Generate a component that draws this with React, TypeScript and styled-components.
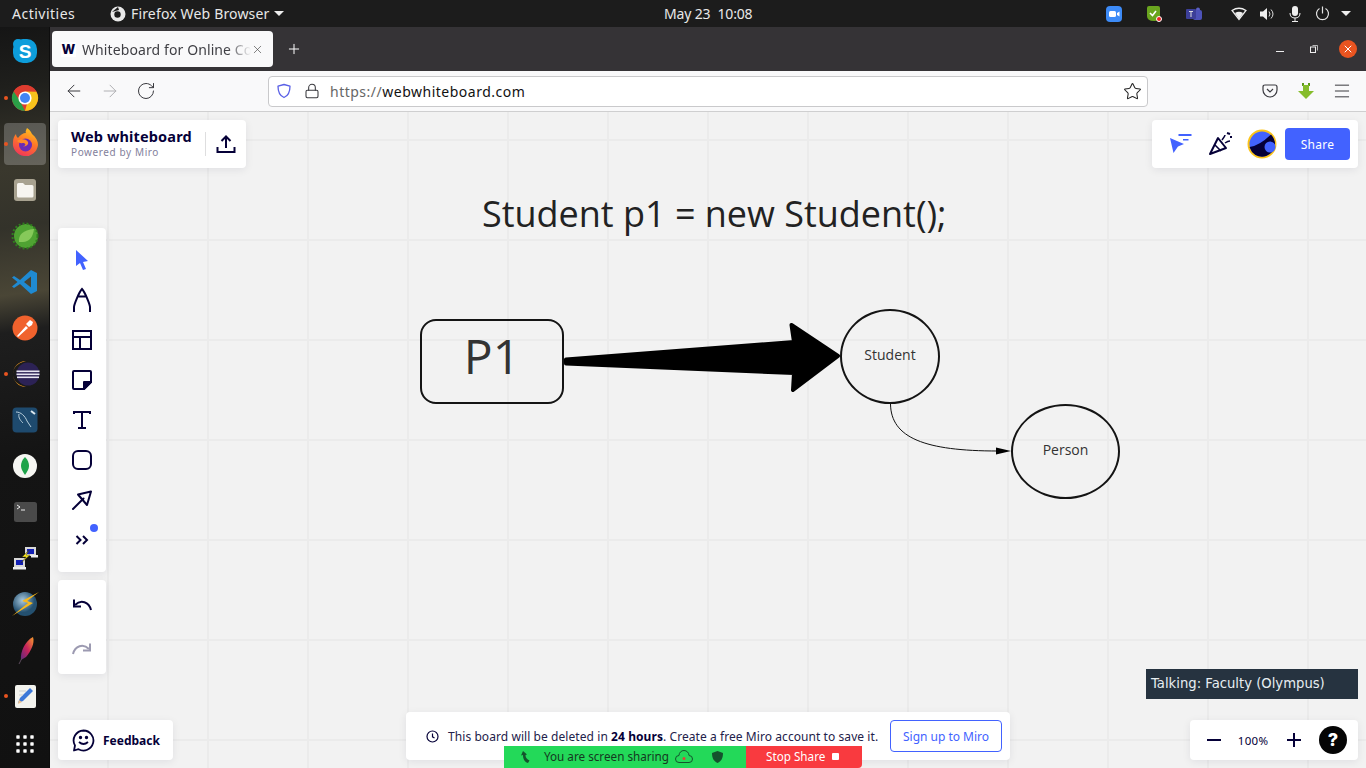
import React from "react";
import styled, { createGlobalStyle } from "styled-components";
import { ArrowLeft, ArrowRight, RotateCw, Lock, Star, Menu, Plus, X } from "lucide-react";

const Global = createGlobalStyle`
  html, body { margin: 0; padding: 0; width: 1366px; height: 768px; overflow: hidden; }
  * { box-sizing: border-box; }
  body { font-family: "Noto Sans", "Open Sans", sans-serif; }
`;

const Screen = styled.div`
  width: 1366px; height: 768px; display: flex; flex-direction: column; overflow: hidden; background: #111;
`;
const TopBar = styled.div`
  height: 27px; flex: none; background: #1c1c1c; color: #e8e8e8; display: flex; align-items: center;
  padding: 0 0 0 12px; font-size: 14px; position: relative;
`;
const Activities = styled.span` width: 98px; letter-spacing: .5px; `;
const AppMenu = styled.div` display: flex; align-items: center; gap: 5px; width: 190px; letter-spacing: .16px; `;
const Caret = styled.span`
  width: 0; height: 0; border-left: 5px solid transparent; border-right: 5px solid transparent; border-top: 5px solid #eee;
`;
const Clock = styled.div` position: absolute; left: 664px; top: 4px; font-size: 14px; white-space: pre; letter-spacing: -.15px; `;
const Tray = styled.div` margin-left: auto; display: flex; align-items: center; height: 27px; padding-right: 7px; `;
const TraySlot = styled.div<{ $w: number }>` width: ${p => p.$w}px; display: flex; justify-content: center; align-items: center; `;

const Main = styled.div` flex: 1; display: flex; min-height: 0; `;
const Dock = styled.div`
  width: 50px; flex: none; padding-top: 1px; display: flex; flex-direction: column;
  border-right: 1px solid #0d0d0d;
  background: linear-gradient(172deg, #151515 0%, #1f1f1c 8%, #3a382d 19%, #33322a 27%, #4a4636 36%, #1e1e1e 41%, #141414 58%, #111 100%);
`;
const DockItem = styled.div<{ $active?: boolean; $running?: boolean; $h?: number }>`
  width: 42px; height: ${p => (p.$active ? 42 : p.$h ?? 46)}px; margin: ${p => (p.$active ? "2px 0 2px 4px" : "0 0 0 4px")};
  position: relative; display: flex; align-items: center; justify-content: center;
  flex: none; border-radius: 4px;
  background: ${p => (p.$active ? "rgba(255,255,255,.22)" : "transparent")};
  &:first-child { height: 47px; padding-bottom: 1px; }
  &::before {
    content: ""; display: ${p => (p.$running ? "block" : "none")}; position: absolute; left: 0; top: 50%; width: 4px; height: 4px; margin-top: -2px;
    border-radius: 50%; background: #e95420;
  }
`;
const Browser = styled.div` flex: 1; display: flex; flex-direction: column; min-width: 0; `;
const TabBar = styled.div`
  height: 44px; flex: none; background: #353336; display: flex; align-items: center; padding-left: 2px; color: #fff;
`;
const Tab = styled.div`
  width: 221px; height: 36px; background: #f9f9fa; border-radius: 4px; display: flex; align-items: center; padding: 0 9px 0 9px; color: #3f3f44; font-size: 14px; gap: 6px; letter-spacing: .1px;
`;
const Favicon = styled.span`
  width: 15px; height: 15px; background: #fff; color: #050038; font-weight: 800; font-size: 13px; line-height: 15px; text-align: center; flex: none; font-family: "Inter", sans-serif;
`;
const TabTitle = styled.span`
  flex: 1; overflow: hidden; white-space: nowrap; margin-right: -6px;
  -webkit-mask-image: linear-gradient(90deg, #000 86%, transparent 100%);
  mask-image: linear-gradient(90deg, #000 86%, transparent 100%);
`;
const NewTab = styled.div` margin-left: 13px; display: flex; `;
const WindowBtns = styled.div` margin-left: auto; display: flex; align-items: center; padding-right: 9px; `;
const WinBtn = styled.div` width: 34px; display: flex; justify-content: center; align-items: center; `;
const CloseBtn = styled.div`
  width: 18px; height: 18px; margin-left: 8px; border-radius: 50%; background: #e95420; display: flex; align-items: center; justify-content: center;
`;
const Toolbar = styled.div`
  height: 41px; flex: none; background: #f9f9fa; border-bottom: 1px solid #cfcfd0; display: flex; align-items: center; padding-left: 14px; color: #3a3a3f;
`;
const NavBtn = styled.div` width: 36px; display: flex; justify-content: flex-start; `;
const UrlBox = styled.div`
  width: 880px; height: 31px; margin-left: 96px; background: #fff; border: 1px solid #c9c9cb; border-radius: 4px; display: flex; align-items: center; padding: 0 5px 0 7px; font-size: 14px; color: #666;
  letter-spacing: .5px;
`;
const UrlIcon = styled.span<{ $w: number }>` display: flex; width: ${p => p.$w}px; flex: none; `;
const UrlHost = styled.span` color: #111; `;
const UrlText = styled.span` flex: 1; `;
const RightTools = styled.div` margin-left: auto; display: flex; align-items: center; padding-right: 6px; `;
const RightTool = styled.div` width: 36px; display: flex; justify-content: center; `;

const Board = styled.div`
  flex: 1; position: relative; overflow: hidden; background-color: #f2f2f2;
  background-image: linear-gradient(90deg, #ebebeb 2px, transparent 2px), linear-gradient(#ebebeb 2px, transparent 2px);
  background-size: 100px 100px; background-position: 57px 27px;
`;
const Card = styled.div`
  position: absolute; background: #fff; border-radius: 4px; box-shadow: 0 2px 8px rgba(5,0,56,.08); display: flex; align-items: center; color: #050038;
`;
const Brand = styled(Card)` left: 8px; top: 8px; width: 188px; height: 48px; padding-left: 13px; `;
const BrandText = styled.div` width: 134px; display: flex; flex-direction: column; margin-top: -1px; `;
const BrandTitle = styled.div` font: 700 14.5px/17px "Noto Sans", sans-serif; letter-spacing: .15px; white-space: nowrap; `;
const BrandSub = styled.div` font-size: 10px; line-height: 15px; color: #83819c; letter-spacing: .6px; white-space: nowrap; `;
const Divider = styled.div` width: 1px; height: 24px; background: #dededf; margin-right: 10px; `;
const ActionCard = styled(Card)` right: 8px; top: 8px; width: 206px; height: 48px; padding: 0 8px 0 17px; `;
const ActionSlot = styled.div<{ $w: number }>` width: ${p => p.$w}px; flex: none; display: flex; align-items: center; `;
const ShareBtn = styled.div`
  width: 65px; height: 32px; flex: none; background: #4262ff; color: #fff; font-size: 12px; border-radius: 4px; display: flex; align-items: center; justify-content: center; letter-spacing: .3px;
`;
const ToolPanel = styled(Card)<{ $top: number; $h: number; $pad: number }>`
  left: 8px; top: ${p => p.$top}px; width: 48px; height: ${p => p.$h}px; flex-direction: column; padding-top: ${p => p.$pad}px;
`;
const ToolBtn = styled.div` width: 48px; height: 40px; flex: none; display: flex; align-items: center; justify-content: center; position: relative; `;
const UndoBtn = styled(ToolBtn)` height: 44px; `;
const Dot = styled.span` position: absolute; right: 8px; top: 4px; width: 8px; height: 8px; border-radius: 50%; background: #4262ff; `;
const Feedback = styled(Card)` left: 8px; bottom: 8px; width: 115px; height: 40px; padding-left: 14px; gap: 8px; font: 700 12px "Noto Sans", sans-serif; `;

const Notice = styled(Card)`
  left: 356px; top: 600px; width: 604px; height: 48px; padding: 0 8px 0 20px; font-size: 12px; color: #23214a; white-space: nowrap; letter-spacing: .07px;
`;
const NoticeText = styled.span` margin-left: 9px; flex: 1; & b { font-weight: 700; color: #050038; } `;
const SignUp = styled.div`
  width: 112px; height: 32px; border: 1px solid #4262ff; color: #4262ff; border-radius: 4px; display: flex; align-items: center; justify-content: center; font-size: 12px; letter-spacing: -.02px;
`;
const ShareBar = styled.div` position: absolute; left: 454px; top: 634px; display: flex; height: 22px; font-size: 11.7px; line-height: 20px; `;
const Sharing = styled.div`
  width: 242px; background: #23d959; color: #15381f; display: flex; align-items: center; padding-left: 16px; white-space: nowrap;
`;
const SharingText = styled.span` margin: 0 6px 2px 13px; `;
const StopShare = styled.div`
  width: 116px; background: #f93a3f; color: #fff; display: flex; align-items: center; justify-content: flex-start; padding: 0 0 2px 20px; gap: 6px; border-bottom-right-radius: 4px;
`;
const StopSquare = styled.span` width: 7px; height: 7px; background: #fff; border-radius: 1px; margin-left: 1px; `;
const Talking = styled.div`
  position: absolute; left: 1096px; top: 557px; width: 212px; height: 30px; background: #263340; color: #e8eef2; font: 13.2px/30px "DejaVu Sans", sans-serif; padding-left: 5px; white-space: nowrap;
`;
const ZoomCard = styled(Card)` right: 8px; bottom: 8px; width: 168px; height: 40px; padding-left: 16px; `;
const ZoomValue = styled.span` width: 48px; margin-left: 7px; text-align: center; font-size: 11.500px; letter-spacing: .3px; `;
const HelpBtn = styled.div`
  width: 28px; height: 28px; margin-left: 17px; border-radius: 50%; background: #050505; color: #fff; font: 800 18px/28px "Inter", sans-serif; text-align: center;
`;
const BoardTitle = styled.div`
  position: absolute; left: 432px; top: 78px; font: 400 36px/48px "Open Sans", sans-serif; color: #222; white-space: nowrap; letter-spacing: -.02px;
`;
const Node = styled.div<{ $x: number; $y: number; $w: number; $h: number; $r: string; $fs: number; $pb: number }>`
  position: absolute; left: ${p => p.$x}px; top: ${p => p.$y}px; width: ${p => p.$w}px; height: ${p => p.$h}px; border: 2px solid #141414; border-radius: ${p => p.$r};
  display: flex; align-items: center; justify-content: center; color: #333; font: 400 ${p => p.$fs}px "Open Sans", sans-serif; padding-bottom: ${p => p.$pb}px;
`;
const Wires = styled.svg` position: absolute; inset: 0; `;

const NAVY = "#050038", BLUE = "#4262ff";

const Ico: React.FC<{ s?: number; vb?: string; children: React.ReactNode }> = ({ s = 36, vb = "0 0 36 36", children }) => (
  <svg width={s} height={s} viewBox={vb} fill="none">{children}</svg>
);

const dockIcons: Array<{ el: React.ReactNode; running?: boolean; active?: boolean }> = [
  { el: <Ico><rect x="6" y="6" width="24" height="24" rx="10" fill="#0d9ddb" /><circle cx="11" cy="11" r="5" fill="#0d9ddb" /><text x="18" y="25" textAnchor="middle" fontFamily="Liberation Sans" fontWeight="700" fontSize="19" fill="#fff">S</text></Ico> },
  { running: true, el: <Ico>
      <circle cx="18" cy="18" r="13" fill="#dd3c2f" />
      <path d="M18 31A13 13 0 0 1 6.700 11.500L13 21l5 10z" fill="#2b9f47" />
      <path d="M18 31a13 13 0 0 0 11.300-19.500L18 11l3 9z" fill="#f8c21c" />
      <path d="M6.700 11.500A13 13 0 0 1 29.300 11.500H18z" fill="#dd3c2f" />
      <circle cx="18" cy="18" r="6.600" fill="#fff" /><circle cx="18" cy="18" r="5" fill="#4285f4" /></Ico> },
  { running: true, active: true, el: <Ico>
      <defs><linearGradient id="ff" x1=".7" y1="0" x2=".3" y2="1"><stop offset="0" stopColor="#ffc61f" /><stop offset=".45" stopColor="#ff7a26" /><stop offset="1" stopColor="#f0355a" /></linearGradient></defs>
      <path d="M6 16c0-3 1-6 3-8 0 2 1 3 2 4 2-3 5-5 8-5-1-1 0-3 1-5 3 2 4 4 5 6 4 3 6 7 6 11a12 12 0 0 1-25-3z" fill="url(#ff)" />
      <circle cx="18.500" cy="19" r="6.500" fill="#6b2bb5" /><path d="M10 15c4-3 10-2 11 1 1 3-3 5-5 4 3 0 3-2 1-3-2 0-4 1-7-2z" fill="#ff8a2a" /></Ico> },
  { el: <Ico><rect x="7" y="7" width="22" height="22" rx="3" fill="#a8a290" /><path d="M10 12.500a1.500 1.500 0 0 1 1.500-1.500H16l2 2h7a1.500 1.500 0 0 1 1.500 1.500V24a1.500 1.500 0 0 1-1.500 1.500H11.500A1.500 1.500 0 0 1 10 24z" fill="#f7f5f0" /></Ico> },
  { el: <Ico><circle cx="19" cy="18" r="12" fill="#4fa332" /><circle cx="18" cy="18" r="12.500" stroke="#2f7d1e" strokeWidth="2" strokeDasharray="2 2" /><path d="M12 24c-1-7 4-12 15-13-1 8-5 13-11 13-1 0-3 0-4 0z" fill="#86c95a" /></Ico> },
  { el: <Ico><path d="M24 6l6 3v18l-6 3-11-10-6 4-2-1.500 5.500-4.500L5 13.500 7 12l6 4zM24 12.500l-7 5.500 7 5.500z" fill="#1f8ad2" /></Ico> },
  { el: <Ico><circle cx="18" cy="18" r="12.500" fill="#f0622d" /><path d="M10 26l9-10 2 2-10 9zM19 14l4-4 3 2-1 3-3 2z" fill="#fff" /></Ico> },
  { running: true, el: <Ico><path d="M19 5a13 13 0 1 0 0 26c-9-2-13-7-13-13S10 7 19 5z" fill="#f39b1f" /><circle cx="21" cy="18" r="11.500" fill="#2c2255" /><rect x="9.500" y="14.500" width="23" height="1.600" fill="#e8e6f2" /><rect x="9.500" y="17.500" width="23" height="1.600" fill="#e8e6f2" /><rect x="10" y="20.500" width="22" height="1.600" fill="#e8e6f2" /></Ico> },
  { el: <Ico><rect x="5.500" y="5.500" width="25" height="25" rx="4" fill="#1e4a6e" /><path d="M9 10c5 0 9 4 11 9l4 6M12 12c-1 4 2 7 4 9" stroke="#b9cfdc" strokeWidth="1" /><path d="M24 9l4 3" stroke="#dde7ee" strokeWidth="2" /></Ico> },
  { el: <Ico><circle cx="18" cy="18" r="12" fill="#f6f6f2" /><path d="M18 9c3 3 4 6 4 9s-2 6-4 9c-2-3-4-6-4-9s1-6 4-9z" fill="#1fa34a" /></Ico> },
  { el: <Ico><rect x="7" y="8" width="23" height="20" rx="2.500" fill="#4a4a4a" /><path d="M10 11l3 2-3 2" stroke="#eee" strokeWidth="1" /><path d="M14 16h4" stroke="#eee" strokeWidth="1" /></Ico> },
  { el: <Ico><rect x="18" y="7" width="11" height="9" fill="#d8d8d8" /><rect x="20" y="9" width="7" height="5" fill="#1320b4" /><rect x="7" y="18" width="11" height="9" fill="#d8d8d8" /><rect x="9" y="20" width="7" height="5" fill="#1320b4" /><rect x="6" y="27" width="13" height="2.500" fill="#eee" /><rect x="24" y="15" width="7" height="2.500" fill="#eee" /><path d="M22 10l-7 7 4 0-5 6 9-8-4 0z" fill="#f5e31c" stroke="#222" strokeWidth=".4" /></Ico> },
  { el: <Ico><defs><radialGradient id="gl" cx=".4" cy=".35"><stop offset="0" stopColor="#a8c8dd" /><stop offset="1" stopColor="#24506f" /></radialGradient></defs><circle cx="18" cy="18" r="12" fill="url(#gl)" /><path d="M32 6L15 15l6 2L5 30l21-13-6-2z" fill="#f9b81a" /></Ico> },
  { el: <Ico><defs><linearGradient id="fe" x1="1" y1="0" x2="0" y2="1"><stop offset="0" stopColor="#f69d2c" /><stop offset=".5" stopColor="#c8235a" /><stop offset="1" stopColor="#5b2a80" /></linearGradient></defs><path d="M26 5c2 6-2 14-7 20l-5 3c-1-8 4-19 12-23z" fill="url(#fe)" /><path d="M15 26l-3 6" stroke="#5a4a5a" strokeWidth="1" /></Ico> },
  { running: true, el: <Ico><rect x="8" y="7" width="21" height="23" rx="2" fill="#f3f3ee" /><path d="M11 25l2-5 10-10 3 3-10 10z" fill="#3c78d8" /><path d="M11 26l1-4 3 2z" fill="#f3c28b" /><path d="M12 13h7M12 17h4" stroke="#cfcfcf" /></Ico> },
];

const AppGrid = () => (
  <svg width="18" height="18" viewBox="0 0 18 18" fill="#fff">
    {[2, 9, 16].flatMap(y => [2, 9, 16].map(x => <rect key={`${x}-${y}`} x={x - 1.7} y={y - 1.7} width="3.400" height="3.400" rx=".6" />))}
  </svg>
);

export default function App() {
  return (
    <Screen>
      <Global />
      <TopBar>
        <Activities>Activities</Activities>
        <AppMenu>
          <svg width="16" height="16" viewBox="0 0 16 16"><circle cx="8" cy="8" r="7.500" fill="#e8e8e8" /><circle cx="7.500" cy="8.500" r="3.200" fill="#1c1c1c" /><path d="M2 6l6-5 1 3z" fill="#1c1c1c" /></svg>
          <span>Firefox Web Browser</span><Caret />
        </AppMenu>
        <Clock>May 23  10:08</Clock>
        <Tray>
          <TraySlot $w={58}><svg width="16" height="16" viewBox="0 0 16 16"><rect width="16" height="16" rx="4" fill="#3d8bf7" /><rect x="3" y="5" width="7" height="6" rx="1.500" fill="#fff" /><path d="M11 7l2.500-1.500v5L11 9z" fill="#fff" /></svg></TraySlot>
          <TraySlot $w={22}><svg width="18" height="18" viewBox="0 0 18 18"><path d="M2 3q0-2 2-2h9q2 0 2 2v8q0 5-6 5-7 0-7-5z" fill="#6aa51f" /><path d="M5 8l2.500 2.500L11 6" stroke="#fff" strokeWidth="1.600" fill="none" /><circle cx="14" cy="14" r="2.500" fill="#e22" stroke="#fff" /></svg></TraySlot>
          <TraySlot $w={58}><svg width="16" height="16" viewBox="0 0 16 16"><circle cx="12" cy="3.500" r="2" fill="#5a5fc4" /><rect x="7" y="4" width="9" height="10" rx="2" fill="#4d52b8" /><rect x="0" y="3" width="10" height="10" rx="1" fill="#3c3f98" /><path d="M3 5.500h4M5 5.500V11" stroke="#ddd" /></svg></TraySlot>
          <TraySlot $w={32}><svg width="16" height="14" viewBox="0 0 16 14"><path d="M1 3.500Q8-1 15 3.500L8 12.500z" stroke="#eee" fill="none" strokeWidth="1.300" /><path d="M4 6Q8 3.500 12 6L8 12z" fill="#eee" /></svg></TraySlot>
          <TraySlot $w={24}><svg width="16" height="14" viewBox="0 0 16 14"><path d="M1 4.500h3L8 1v12L4 9.500H1z" fill="#eee" /><path d="M10 4.500q2 2.500 0 5M12 2.500q4 4.500 0 9" stroke="#ddd" fill="none" /></svg></TraySlot>
          <TraySlot $w={32}><svg width="12" height="18" viewBox="0 0 12 18"><rect x="3" y="1" width="6" height="10" rx="3" fill="#eee" /><path d="M1 8q0 5 5 5t5-5M6 13v3M3 16.500h6" stroke="#eee" fill="none" /></svg></TraySlot>
          <TraySlot $w={22}><svg width="15" height="15" viewBox="0 0 15 15"><path d="M4.500 2.500a6 6 0 1 0 6 0M7.500 .5v7" stroke="#e4e4e4" strokeWidth="1.200" fill="none" /></svg></TraySlot>
          <TraySlot $w={26}><Caret /></TraySlot>
        </Tray>
      </TopBar>
      <Main>
        <Dock>
          {dockIcons.map((d, i) => <DockItem key={i} $running={d.running} $active={d.active}>{d.el}</DockItem>)}
          <DockItem $h={50}><AppGrid /></DockItem>
        </Dock>
        <Browser>
          <TabBar>
            <Tab>
              <Favicon>W</Favicon>
              <TabTitle>Whiteboard for Online Co</TabTitle>
              <X size={13} strokeWidth={1.200} color="#444" />
            </Tab>
            <NewTab><Plus size={16} strokeWidth={1.500} /></NewTab>
            <WindowBtns>
              <WinBtn><svg width="10" height="10" viewBox="0 0 10 10"><rect x="1" y="7" width="8" height="1" fill="#eee" /></svg></WinBtn>
              <WinBtn><svg width="10" height="10" viewBox="0 0 10 10" fill="none" stroke="#eee"><path d="M3.500 1.500h5v5" strokeWidth=".7" /><rect x="1.500" y="3" width="5" height="5.500" strokeWidth="1" /></svg></WinBtn>
              <CloseBtn><X size={12} color="#fff" strokeWidth={2} /></CloseBtn>
            </WindowBtns>
          </TabBar>
          <Toolbar>
            <NavBtn><ArrowLeft size={20} strokeWidth={1.200} /></NavBtn>
            <NavBtn><ArrowRight size={20} strokeWidth={1.200} color="#b0b0b3" /></NavBtn>
            <NavBtn><RotateCw size={20} strokeWidth={1.200} /></NavBtn>
            <UrlBox>
              <UrlIcon $w={28}><svg width="16" height="16" viewBox="0 0 16 16" fill="none"><path d="M8 1.500l6 1.700c0 6-1.500 9.500-6 11.300C3.500 12.700 2 9.200 2 3.200z" stroke="#5a60e6" strokeWidth="1.300" strokeLinejoin="round" /></svg></UrlIcon>
              <UrlIcon $w={26}><Lock size={16} strokeWidth={1.600} color="#3a3a3f" /></UrlIcon>
              <UrlText>https://<UrlHost>webwhiteboard.com</UrlHost></UrlText>
              <Star size={19} strokeWidth={1.300} color="#222" />
            </UrlBox>
            <RightTools>
              <RightTool><svg width="16" height="14" viewBox="0 0 16 14" fill="none" stroke="#3a3a3f" strokeWidth="1.200"><path d="M1 3q0-2 2-2h10q2 0 2 2v3a7 7 0 0 1-14 0z" /><path d="M5 5l3 3 3-3" /></svg></RightTool>
              <RightTool><svg width="18" height="18" viewBox="0 0 18 18"><path d="M5 1h2v3H5zM11 1h2v3h-2z" fill="#5e9a1c" /><path d="M6 3h6v6h5l-8 8-8-8h5z" fill="#86bd2c" /></svg></RightTool>
              <RightTool><Menu size={20} strokeWidth={1.200} /></RightTool>
            </RightTools>
          </Toolbar>
          <Board>
            <BoardTitle>Student p1 = new Student();</BoardTitle>
            <Node $x={370} $y={207} $w={144} $h={85} $r="16px" $fs={48} $pb={12}>P1</Node>
            <Node $x={790} $y={197} $w={100} $h={95} $r="50%" $fs={14} $pb={4}>Student</Node>
            <Node $x={961} $y={292} $w={109} $h={95} $r="50%" $fs={14} $pb={4}>Person</Node>
            <Wires width="1316" height="656" viewBox="50 112 1316 656">
              <path d="M566 359.500L794 342 791.500 325 838 356 793 390 794 373 566 363.500Z" fill="#000" stroke="#000" strokeWidth="4" strokeLinejoin="round" />
              <path d="M890.500 404C891 438 925 451 998 451" stroke="#111" strokeWidth="1" fill="none" />
              <path d="M996 447.500L1011 451 996 454.500z" fill="#000" />
            </Wires>

            <Brand>
              <BrandText><BrandTitle>Web whiteboard</BrandTitle><BrandSub>Powered by Miro</BrandSub></BrandText>
              <Divider />
              <svg width="20" height="20" viewBox="0 0 20 20" fill="none" stroke={NAVY} strokeWidth="2"><path d="M10 14V2.500M5.500 7L10 2.500 14.500 7M1.500 13v5h17v-5" /></svg>
            </Brand>
            <ActionCard>
              <ActionSlot $w={39}><svg width="24" height="22" viewBox="0 0 24 22" fill={BLUE}><path d="M1 5L15 11 9 13.500 4.500 20z" /><rect x="9.500" y="1" width="13" height="2" /><rect x="14" y="6" width="5.500" height="1.500" /></svg></ActionSlot>
              <ActionSlot $w={39}><svg width="26" height="26" viewBox="0 0 26 26" fill="none" stroke={NAVY} strokeWidth="2"><path d="M10 7L2 23l16-6z" strokeLinejoin="round" /><path d="M7 14l6 6M14 9q3-4 3-5M17 12q3-2 5-2" strokeWidth="1.500" /><path d="M19 2l3 1M22 6l2 0" strokeWidth="2" /></svg></ActionSlot>
              <ActionSlot $w={38}><svg width="30" height="30" viewBox="0 0 30 30"><circle cx="15" cy="15" r="13.500" fill="#4262ff" stroke="#fcc419" strokeWidth="2" /><path d="M2.500 18Q12 17 24 5.500 28 10 28 15A13 13 0 0 1 5 23z" fill="#050038" /><circle cx="23" cy="18" r="5.500" fill="#4262ff" /></svg></ActionSlot>
              <ShareBtn>Share</ShareBtn>
            </ActionCard>

            <ToolPanel $top={116} $h={344} $pad={12}>
              <ToolBtn><svg width="18" height="22" viewBox="0 0 18 22"><path d="M3 1l12 11-5 1 3 7-3 1-3-7-4 3z" fill={BLUE} /></svg></ToolBtn>
              <ToolBtn><svg width="20" height="26" viewBox="0 0 20 26" fill="none" stroke={NAVY} strokeWidth="2"><path d="M2 25v-5c0-2 5-15 8-18 3 3 8 16 8 18v5M6.500 9.500h7" /></svg></ToolBtn>
              <ToolBtn><svg width="22" height="22" viewBox="0 0 22 22" fill="none" stroke={NAVY} strokeWidth="2"><rect x="2" y="2" width="18" height="18" /><path d="M2 8h18M9 8v12" /></svg></ToolBtn>
              <ToolBtn><svg width="22" height="22" viewBox="0 0 22 22" fill="none"><path d="M20 13V3a1 1 0 0 0-1-1H3a1 1 0 0 0-1 1v16a1 1 0 0 0 1 1h10z" stroke={NAVY} strokeWidth="2" /><path d="M13 20v-7h7z" fill={NAVY} stroke={NAVY} strokeWidth="2" strokeLinejoin="round" /></svg></ToolBtn>
              <ToolBtn><svg width="20" height="20" viewBox="0 0 20 20" fill="none" stroke={NAVY} strokeWidth="2"><path d="M2 4V2h16v2M10 2v16M6 18h8" /></svg></ToolBtn>
              <ToolBtn><svg width="22" height="22" viewBox="0 0 22 22" fill="none" stroke={NAVY} strokeWidth="2"><rect x="2" y="2" width="18" height="18" rx="5" /></svg></ToolBtn>
              <ToolBtn><svg width="22" height="22" viewBox="0 0 22 22" fill="none" stroke={NAVY} strokeWidth="2"><path d="M7 5.500L20 2.500 16 16z" strokeLinejoin="round" /><path d="M2 20L12.500 9.500" strokeLinecap="round" /></svg></ToolBtn>
              <ToolBtn>
                <svg width="14" height="12" viewBox="0 0 14 12" fill="none" stroke={NAVY} strokeWidth="2"><path d="M1.500 2l4 4-4 4M8 2l4 4-4 4" /></svg>
                <Dot />
              </ToolBtn>
            </ToolPanel>
            <ToolPanel $top={468} $h={94} $pad={3}>
              <UndoBtn><svg width="20" height="14" viewBox="0 0 20 14" fill="none" stroke={NAVY} strokeWidth="2"><path d="M19 12C17 4 9 1 3 7" /><path d="M2 1.500v7h7" /></svg></UndoBtn>
              <UndoBtn><svg width="20" height="14" viewBox="0 0 20 14" fill="none" stroke="#9c9ab1" strokeWidth="2"><path d="M1 12C3 4 11 1 17 7" /><path d="M18 1.500v7h-7" /></svg></UndoBtn>
            </ToolPanel>
            <Feedback>
              <svg width="23" height="23" viewBox="0 0 23 23" fill="none" stroke={NAVY} strokeWidth="1.800"><path d="M11.500 1.500a10 10 0 1 1-5 18.700L2 21.500l1-5A10 10 0 0 1 11.500 1.500z" strokeLinejoin="round" /><path d="M7 13q4.500 4 9 0" /><circle cx="8.500" cy="8.500" r=".8" /><circle cx="14.500" cy="8.500" r=".8" /></svg>
              Feedback
            </Feedback>

            <Notice>
              <svg width="13" height="13" viewBox="0 0 13 13" fill="none" stroke={NAVY} strokeWidth="1.200"><circle cx="6.500" cy="6.500" r="5.500" /><path d="M6.500 3.500v3.300l2 1.200" /></svg>
              <NoticeText>This board will be deleted in <b>24 hours</b>. Create a free Miro account to save it.</NoticeText>
              <SignUp>Sign up to Miro</SignUp>
            </Notice>
            <ShareBar>
              <Sharing>
                <svg width="11" height="12" viewBox="0 0 11 12" fill="#14532d"><path d="M3 0l4 3.500-1.500.5c0 3 1.500 4 4 5.500L8 12C4 11 3 7 3 4L1 4.500z" /></svg>
                <SharingText>You are screen sharing</SharingText>
                <svg width="18" height="14" viewBox="0 0 18 14" fill="none" stroke="#14532d"><path d="M4 12.500a3.500 3.500 0 0 1 0-7 5 5 0 0 1 10 0 3.500 3.500 0 0 1 0 7z" /><circle cx="9" cy="8.500" r="1.500" fill="#e0433a" stroke="none" /></svg>
                <svg style={{ marginLeft: 19 }} width="11" height="12" viewBox="0 0 11 12" fill="#14532d"><path d="M5.500 0L11 2c0 5-1.500 8-5.500 10C1.500 10 0 7 0 2z" /></svg>
              </Sharing>
              <StopShare>Stop Share<StopSquare /></StopShare>
            </ShareBar>
            <Talking>Talking: Faculty (Olympus)</Talking>
            <ZoomCard>
              <svg width="16" height="16" viewBox="0 0 16 16"><rect x="1" y="7" width="14" height="2" fill={NAVY} /></svg>
              <ZoomValue>100%</ZoomValue>
              <svg style={{ marginLeft: 9 }} width="16" height="16" viewBox="0 0 16 16" fill={NAVY}><rect x="1" y="7" width="14" height="2" /><rect x="7" y="1" width="2" height="14" /></svg>
              <HelpBtn>?</HelpBtn>
            </ZoomCard>
          </Board>
        </Browser>
      </Main>
    </Screen>
  );
}
